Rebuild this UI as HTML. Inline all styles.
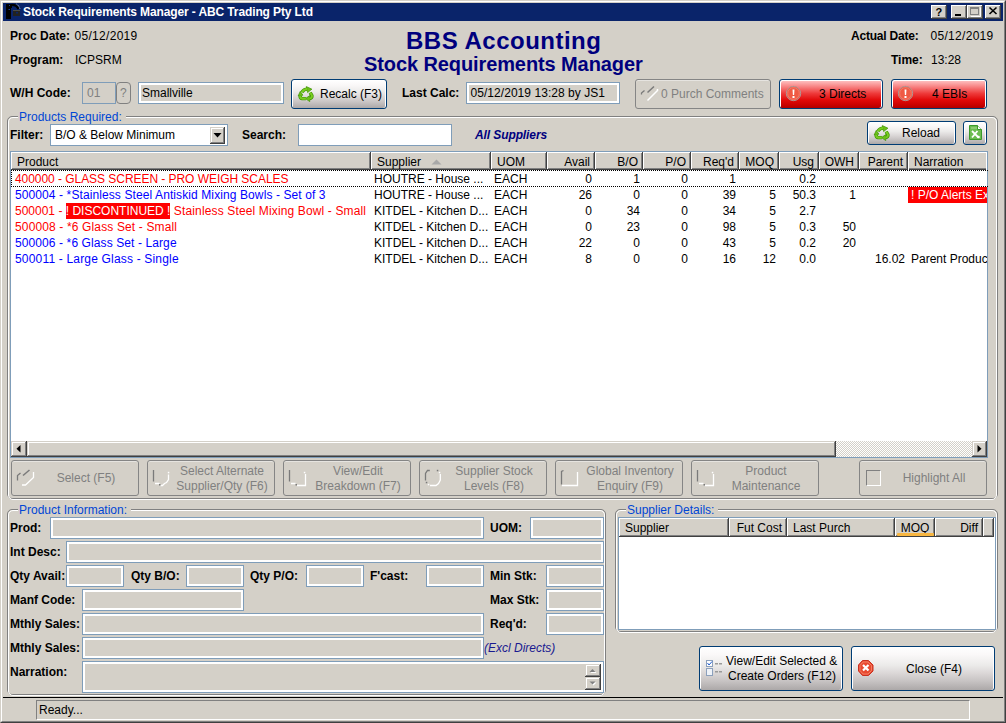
<!DOCTYPE html><html><head><meta charset="utf-8"><title>Stock Requirements Manager</title><style>
*{margin:0;padding:0;box-sizing:border-box}
html,body{width:1006px;height:723px;overflow:hidden;background:#d4d0c8}
body{position:relative;font-family:"Liberation Sans",sans-serif;font-size:12px;color:#000}
.t{position:absolute;font-size:12px;line-height:14px;white-space:nowrap}
.b{font-weight:bold}
.ic{position:absolute;overflow:visible}
.bx{position:absolute}
.frame{position:absolute;border-top:1px solid #d4d0c8;border-left:1px solid #d4d0c8;border-right:1px solid #404040;border-bottom:1px solid #404040}
.frame2{position:absolute;border-top:1px solid #fff;border-left:1px solid #fff;border-right:1px solid #808080;border-bottom:1px solid #808080}
.title{position:absolute;background:#0a246a}
.tbtn{position:absolute;background:#d4d0c8;box-shadow:inset -1px -1px 0 #404040,inset 1px 1px 0 #d4d0c8,inset -2px -2px 0 #808080,inset 2px 2px 0 #fff}
.ttb{position:absolute;background:#d4d0c8;box-shadow:inset -1px -1px 0 #404040,inset 1px 1px 0 #fff,inset -2px -2px 0 #808080}
.inp{position:absolute;border:1px solid #7f9db9;background:#fff}
.inpn{position:absolute;border:1px solid #7f9db9;background:#d4d0c8}
.inpg{position:absolute;border:1px solid #7f9db9;background:#d4d0c8;box-shadow:inset 0 0 0 2px #fff}
.btn{position:absolute;border:1px solid #003c74;border-radius:3px;background:linear-gradient(#fff 0%,#faf8f8 18%,#ecebea 42%,#dad6d6 62%,#c6c2c2 80%,#aca8a8 100%);box-shadow:inset 1px 1px 0 #fff,inset -1px 0 0 #fff}
.rbtn{position:absolute;border:1px solid #003c74;border-radius:3px;background:linear-gradient(#ffc8c8 0%,#f88888 22%,#ee3a3a 48%,#e00808 72%,#c80000 90%,#b00000 100%);box-shadow:inset 1px 1px 0 #fff,inset -1px 0 0 #fff}
.dbtn{position:absolute;border:1px solid #858585;border-radius:3px;background:#d4d0c8;box-shadow:inset 0 1px 0 #e6e4e0}
.qbtn{position:absolute;border:1px solid #808080;border-radius:4px;background:#d4d0c8}
.g1{position:absolute;border:1px solid #808080;border-radius:5px}
.g2{position:absolute;border:1px solid #fff;border-radius:5px}
.glbl{position:absolute;color:#0046d5;background:#d4d0c8;padding:0 4px 0 1px;font-size:12px;line-height:14px;white-space:nowrap}
.dis{color:#808080}
.hc{position:absolute;background:#d4d0c8;box-shadow:inset -1px -1px 0 #404040,inset 1px 1px 0 #fff,inset -2px -2px 0 #808080}
.red{color:#ff0000}.blu{color:#0000ff}
</style></head><body>
<div class="frame" style="left:0px;top:0px;width:1006px;height:723px;"></div>
<div class="frame2" style="left:1px;top:1px;width:1004px;height:721px;"></div>
<div class="title" style="left:3px;top:3px;width:1000px;height:18px;"></div>
<div class="t b" style="left:23px;top:5px;color:#fff;letter-spacing:-0.12px">Stock Requirements Manager - ABC Trading Pty Ltd</div>
<div class="ttb" style="left:931px;top:5px;width:16px;height:14px;"></div>
<div class="ttb" style="left:951px;top:5px;width:16px;height:14px;"></div>
<div class="ttb" style="left:967px;top:5px;width:16px;height:14px;"></div>
<div class="ttb" style="left:985px;top:5px;width:16px;height:14px;"></div>
<svg class="ic" style="left:0;top:0" width="1006" height="24"><path d="M6 4H12V8H11V19H6z" fill="#000"/><rect x="9" y="5" width="1" height="1" fill="#1a3a9a"/><rect x="8.5" y="9" width="1.5" height="1" fill="#1a3a9a"/><path d="M11 5 Q16.5 4.5 18.5 9" stroke="#000" stroke-width="2.2" fill="none"/><path d="M16.5 4 Q19 5.5 20 9" stroke="#d0d0d0" stroke-width="0.9" fill="none" stroke-dasharray="1 0.8"/><rect x="13" y="10" width="7" height="6" fill="#222220"/><rect x="13" y="10" width="7" height="1" fill="#4a4a46"/><rect x="16" y="12" width="2" height="1.5" fill="#0a246a"/><text x="935.5" y="16" font-family="Liberation Sans" font-weight="bold" font-size="11" fill="#000">?</text><rect x="955" y="14" width="6" height="2" fill="#000"/><rect x="970.5" y="7.5" width="8" height="7" fill="none" stroke="#808080"/><rect x="971" y="8" width="8" height="1" fill="#808080"/><path d="M971 16.5h9.5v-9" stroke="#fff" fill="none"/><path d="M989.5 7.5l7 6.5M996.5 7.5l-7 6.5" stroke="#000" stroke-width="1.6"/></svg>
<div class="t b" style="left:10px;top:29px;">Proc Date:</div>
<div class="t " style="left:75px;top:29px;letter-spacing:0.3px;margin-left:-0.5px">05/12/2019</div>
<div class="t b" style="left:10px;top:53px;">Program:</div>
<div class="t " style="left:75px;top:53px;">ICPSRM</div>
<div class="t b" style="left:10px;top:86px;">W/H Code:</div>
<div class="t b" style="left:406px;top:28px;font-size:24px;line-height:26px;color:#00007e;letter-spacing:0.5px">BBS Accounting</div>
<div class="t b" style="left:364px;top:53px;font-size:20px;line-height:22px;color:#00007e;letter-spacing:-0.1px">Stock Requirements Manager</div>
<div class="t b" style="left:851px;top:29px;letter-spacing:-0.2px">Actual Date:</div>
<div class="t " style="left:931px;top:29px;letter-spacing:0.3px;margin-left:-0.5px">05/12/2019</div>
<div class="t b" style="left:891px;top:53px;">Time:</div>
<div class="t " style="left:931px;top:53px;">13:28</div>
<div class="inpn" style="left:82px;top:82px;width:34px;height:22px;"></div>
<div class="t dis" style="left:87px;top:86px;">01</div>
<div class="qbtn" style="left:116px;top:82px;width:15px;height:22px;"></div>
<div class="t dis" style="left:120px;top:86px;">?</div>
<div class="inpg" style="left:138px;top:82px;width:146px;height:22px;"></div>
<div class="t " style="left:142px;top:86px;">Smallville</div>
<div class="btn" style="left:291px;top:79px;width:96px;height:30px;"></div>
<svg class="ic" style="left:298px;top:86px" width="16" height="16" viewBox="0 0 16 16"><g transform="translate(1,1) scale(0.86)"><g stroke-linejoin="round"><path d="M3.5 6 Q5.5 2.5 9.5 2.5" stroke="#3a9000" stroke-width="4" fill="none"/><path d="M8.5 -0.5 L15 2.5 L10 6.5z" fill="#6cc018" stroke="#3a9000" stroke-width="0.8"/><path d="M3.5 6 Q5.5 2.5 9.5 2.5" stroke="#78cc20" stroke-width="2.4" fill="none"/><path d="M13 6.5 L15 10 Q15.5 13 12 13.5" stroke="#3a9000" stroke-width="4" fill="none"/><path d="M12.5 10 L7.5 13.5 L12.5 17z" fill="#6cc018" stroke="#3a9000" stroke-width="0.8"/><path d="M13 6.5 L15 10 Q15.5 13 12 13.5" stroke="#78cc20" stroke-width="2.4" fill="none"/><path d="M8 13.5 L3.5 13.5 Q1 13 1.5 10" stroke="#3a9000" stroke-width="4" fill="none"/><path d="M-1 10.5 L1.5 5 L4.5 9.5z" fill="#6cc018" stroke="#3a9000" stroke-width="0.8"/><path d="M8 13.5 L3.5 13.5 Q1 13 1.5 10" stroke="#78cc20" stroke-width="2.4" fill="none"/></g></g></svg>
<div class="t " style="left:320px;top:87px;">Recalc (F3)</div>
<div class="t b" style="left:402px;top:86px;">Last Calc:</div>
<div class="inpg" style="left:466px;top:82px;width:154px;height:22px;"></div>
<div class="t " style="left:471px;top:86px;letter-spacing:0.05px;margin-left:-0.5px">05/12/2019 13:28 by JS1</div>
<div class="dbtn" style="left:635px;top:79px;width:136px;height:30px;"></div>
<svg class="ic" style="left:636px;top:82px" width="28" height="24" viewBox="0 0 28 24"><path d="M5.5 12.5 L5.5 11 L8.5 8.5" stroke="#7a7a7a" stroke-width="1.3" fill="none"/><path d="M11.5 10.5 L18 4.5" stroke="#7a7a7a" stroke-width="1.5" fill="none"/><path d="M11.5 18.5 L21.5 8.5 L21.5 7" stroke="#fff" stroke-width="1.5" fill="none"/></svg>
<div class="t dis" style="left:661px;top:87px;">0 Purch Comments</div>
<div class="rbtn" style="left:779px;top:79px;width:104px;height:30px;"></div>
<svg class="ic" style="left:786px;top:86px" width="15" height="16" viewBox="0 0 15 16"><circle cx="7.5" cy="7.5" r="7.2" fill="#ef5a44" stroke="#a89c9c" stroke-width="0.9"/><circle cx="7.5" cy="7.5" r="5.8" fill="none" stroke="#f88070" stroke-width="0.8"/><path d="M6.5 3.5 h2 l-0.4 5.5 h-1.2z" fill="#fff"/><rect x="6.5" y="10" width="2" height="2" fill="#fff"/></svg>
<div class="t " style="left:819px;top:87px;">3 Directs</div>
<div class="rbtn" style="left:891px;top:79px;width:96px;height:30px;"></div>
<svg class="ic" style="left:898px;top:86px" width="15" height="16" viewBox="0 0 15 16"><circle cx="7.5" cy="7.5" r="7.2" fill="#ef5a44" stroke="#a89c9c" stroke-width="0.9"/><circle cx="7.5" cy="7.5" r="5.8" fill="none" stroke="#f88070" stroke-width="0.8"/><path d="M6.5 3.5 h2 l-0.4 5.5 h-1.2z" fill="#fff"/><rect x="6.5" y="10" width="2" height="2" fill="#fff"/></svg>
<div class="t " style="left:932px;top:87px;">4 EBIs</div>
<div class="g1" style="left:7px;top:116px;width:991px;height:383px;"></div>
<div class="g2" style="left:8px;top:117px;width:989px;height:383px;"></div>
<div class="glbl" style="left:18px;top:110px">Products Required:</div>
<div class="t b" style="left:10px;top:128px;">Filter:</div>
<div class="inp" style="left:50px;top:124px;width:178px;height:22px;"></div>
<div class="t " style="left:55px;top:128px;">B/O &amp; Below Minimum</div>
<div class="tbtn" style="left:210px;top:127px;width:15px;height:17px;"></div>
<svg class="ic" style="left:213px;top:133px" width="9" height="5" viewBox="0 0 9 5"><path d="M0.5 0 L8.5 0 L4.5 4.5z" fill="#000"/></svg>
<div class="t b" style="left:242px;top:128px;">Search:</div>
<div class="inp" style="left:298px;top:124px;width:154px;height:22px;"></div>
<div class="t b" style="left:475px;top:128px;font-style:italic;color:#00007e;letter-spacing:-0.1px">All Suppliers</div>
<div class="btn" style="left:867px;top:121px;width:89px;height:24px;"></div>
<svg class="ic" style="left:874px;top:125px" width="16" height="16" viewBox="0 0 16 16"><g transform="translate(1,1) scale(0.86)"><g stroke-linejoin="round"><path d="M3.5 6 Q5.5 2.5 9.5 2.5" stroke="#3a9000" stroke-width="4" fill="none"/><path d="M8.5 -0.5 L15 2.5 L10 6.5z" fill="#6cc018" stroke="#3a9000" stroke-width="0.8"/><path d="M3.5 6 Q5.5 2.5 9.5 2.5" stroke="#78cc20" stroke-width="2.4" fill="none"/><path d="M13 6.5 L15 10 Q15.5 13 12 13.5" stroke="#3a9000" stroke-width="4" fill="none"/><path d="M12.5 10 L7.5 13.5 L12.5 17z" fill="#6cc018" stroke="#3a9000" stroke-width="0.8"/><path d="M13 6.5 L15 10 Q15.5 13 12 13.5" stroke="#78cc20" stroke-width="2.4" fill="none"/><path d="M8 13.5 L3.5 13.5 Q1 13 1.5 10" stroke="#3a9000" stroke-width="4" fill="none"/><path d="M-1 10.5 L1.5 5 L4.5 9.5z" fill="#6cc018" stroke="#3a9000" stroke-width="0.8"/><path d="M8 13.5 L3.5 13.5 Q1 13 1.5 10" stroke="#78cc20" stroke-width="2.4" fill="none"/></g></g></svg>
<div class="t " style="left:902px;top:126px;">Reload</div>
<div class="btn" style="left:963px;top:121px;width:24px;height:24px;"></div>
<svg class="ic" style="left:969px;top:125px" width="14" height="16" viewBox="0 0 14 16"><path d="M0.5 0.5 H8.5 L12.5 4.5 V14.5 H0.5z" fill="#6cbc50" stroke="#3c9a2a"/><path d="M2 2 H8 V4 H2z" fill="#8ccc70"/><path d="M8.5 0.5 V4.5 H12.5" fill="#fff" stroke="#3c9a2a"/><path d="M3 6 L9.5 12.5 M8.5 6 L3 12.5" stroke="#fff" stroke-width="1.8"/><circle cx="9.5" cy="12" r="1.3" fill="#fff"/></svg>
<div class="inp" style="left:10px;top:151px;width:978px;height:307px;"></div>
<div class="hc" style="left:11px;top:152px;width:360px;height:18px;"></div>
<div class="t " style="left:17px;top:155px;">Product</div>
<div class="hc" style="left:371px;top:152px;width:120px;height:18px;"></div>
<div class="t " style="left:377px;top:155px;">Supplier</div>
<div class="hc" style="left:491px;top:152px;width:56px;height:18px;"></div>
<div class="t " style="left:497px;top:155px;">UOM</div>
<div class="hc" style="left:547px;top:152px;width:48px;height:18px;"></div>
<div class="t " style="right:416px;top:155px;">Avail</div>
<div class="hc" style="left:595px;top:152px;width:48px;height:18px;"></div>
<div class="t " style="right:368px;top:155px;">B/O</div>
<div class="hc" style="left:643px;top:152px;width:48px;height:18px;"></div>
<div class="t " style="right:320px;top:155px;">P/O</div>
<div class="hc" style="left:691px;top:152px;width:48px;height:18px;"></div>
<div class="t " style="right:272px;top:155px;">Req'd</div>
<div class="hc" style="left:739px;top:152px;width:40px;height:18px;"></div>
<div class="t " style="right:232px;top:155px;">MOQ</div>
<div class="hc" style="left:779px;top:152px;width:40px;height:18px;"></div>
<div class="t " style="right:192px;top:155px;">Usg</div>
<div class="hc" style="left:819px;top:152px;width:40px;height:18px;"></div>
<div class="t " style="right:152px;top:155px;">OWH</div>
<div class="hc" style="left:859px;top:152px;width:49px;height:18px;"></div>
<div class="t " style="right:103px;top:155px;">Parent</div>
<div class="bx" style="left:908px;top:152px;width:78px;height:18px;background:#d4d0c8;box-shadow:inset 1px 1px 0 #fff,inset 0 -1px 0 #404040,inset 0 -2px 0 #808080"></div>
<div class="t " style="left:914px;top:155px;">Narration</div>
<svg class="ic" style="left:431px;top:159px" width="11" height="6" viewBox="0 0 11 6"><path d="M0.5 5.5 L5.5 0.5 L10.5 5.5z" fill="#a8a8a8"/></svg>
<div class="t " style="left:15px;top:172px;"><span class="red" style="letter-spacing:-0.05px">400000 - GLASS SCREEN - PRO WEIGH SCALES</span></div>
<div class="t " style="left:374px;top:172px;">HOUTRE - House ...</div>
<div class="t " style="left:494px;top:172px;">EACH</div>
<div class="t " style="right:414px;top:172px;">0</div>
<div class="t " style="right:366px;top:172px;">1</div>
<div class="t " style="right:318px;top:172px;">0</div>
<div class="t " style="right:270px;top:172px;">1</div>
<div class="t " style="right:190px;top:172px;">0.2</div>
<div class="t " style="left:15px;top:188px;"><span class="blu" style="letter-spacing:0.1px">500004 - *Stainless Steel Antiskid Mixing Bowls - Set of 3</span></div>
<div class="t " style="left:374px;top:188px;">HOUTRE - House ...</div>
<div class="t " style="left:494px;top:188px;">EACH</div>
<div class="t " style="right:414px;top:188px;">26</div>
<div class="t " style="right:366px;top:188px;">0</div>
<div class="t " style="right:318px;top:188px;">0</div>
<div class="t " style="right:270px;top:188px;">39</div>
<div class="t " style="right:230px;top:188px;">5</div>
<div class="t " style="right:190px;top:188px;">50.3</div>
<div class="t " style="right:150px;top:188px;">1</div>
<div class="bx" style="left:908px;top:187px;width:79px;height:16px;background:#ff0000"></div>
<div class="bx" style="left:908px;top:186px;width:79px;height:17px;overflow:hidden"><div class="t" style="left:3px;top:2px;color:#fff">! P/O Alerts Exceptions</div></div>
<div class="t " style="left:15px;top:204px;"><span class="red">500001 - </span><span style="background:#ff0000;color:#fff;padding:1px 0 1px 0">! DISCONTINUED !</span><span class="red" style="letter-spacing:0.14px"> Stainless Steel Mixing Bowl - Small</span></div>
<div class="t " style="left:374px;top:204px;">KITDEL - Kitchen D...</div>
<div class="t " style="left:494px;top:204px;">EACH</div>
<div class="t " style="right:414px;top:204px;">0</div>
<div class="t " style="right:366px;top:204px;">34</div>
<div class="t " style="right:318px;top:204px;">0</div>
<div class="t " style="right:270px;top:204px;">34</div>
<div class="t " style="right:230px;top:204px;">5</div>
<div class="t " style="right:190px;top:204px;">2.7</div>
<div class="t " style="left:15px;top:220px;"><span class="red" style="letter-spacing:0.14px">500008 - *6 Glass Set - Small</span></div>
<div class="t " style="left:374px;top:220px;">KITDEL - Kitchen D...</div>
<div class="t " style="left:494px;top:220px;">EACH</div>
<div class="t " style="right:414px;top:220px;">0</div>
<div class="t " style="right:366px;top:220px;">23</div>
<div class="t " style="right:318px;top:220px;">0</div>
<div class="t " style="right:270px;top:220px;">98</div>
<div class="t " style="right:230px;top:220px;">5</div>
<div class="t " style="right:190px;top:220px;">0.3</div>
<div class="t " style="right:150px;top:220px;">50</div>
<div class="t " style="left:15px;top:236px;"><span class="blu" style="letter-spacing:0.1px">500006 - *6 Glass Set - Large</span></div>
<div class="t " style="left:374px;top:236px;">KITDEL - Kitchen D...</div>
<div class="t " style="left:494px;top:236px;">EACH</div>
<div class="t " style="right:414px;top:236px;">22</div>
<div class="t " style="right:366px;top:236px;">0</div>
<div class="t " style="right:318px;top:236px;">0</div>
<div class="t " style="right:270px;top:236px;">43</div>
<div class="t " style="right:230px;top:236px;">5</div>
<div class="t " style="right:190px;top:236px;">0.2</div>
<div class="t " style="right:150px;top:236px;">20</div>
<div class="t " style="left:15px;top:252px;"><span class="blu" style="letter-spacing:0.18px">500011 - Large Glass - Single</span></div>
<div class="t " style="left:374px;top:252px;">KITDEL - Kitchen D...</div>
<div class="t " style="left:494px;top:252px;">EACH</div>
<div class="t " style="right:414px;top:252px;">8</div>
<div class="t " style="right:366px;top:252px;">0</div>
<div class="t " style="right:318px;top:252px;">0</div>
<div class="t " style="right:270px;top:252px;">16</div>
<div class="t " style="right:230px;top:252px;">12</div>
<div class="t " style="right:190px;top:252px;">0.0</div>
<div class="t " style="right:101px;top:252px;">16.02</div>
<div class="bx" style="left:908px;top:250px;width:79px;height:17px;overflow:hidden"><div class="t" style="left:3px;top:2px">Parent Product</div></div>
<div class="bx" style="left:11px;top:170px;width:977px;height:17px;border:1px dotted #000;border-right:none"></div>
<div class="tbtn" style="left:11px;top:441px;width:16px;height:16px;"></div>
<svg class="ic" style="left:16px;top:445px" width="5" height="8" viewBox="0 0 5 8"><path d="M4.5 0 L4.5 7.5 L0.5 3.75z" fill="#000"/></svg>
<div class="tbtn" style="left:27px;top:441px;width:809px;height:16px;"></div>
<div class="bx" style="left:836px;top:441px;width:136px;height:16px;background:repeating-conic-gradient(#fff 0 25%,#d4d0c8 0 50%) 0 0/2px 2px"></div>
<div class="tbtn" style="left:972px;top:441px;width:15px;height:16px;"></div>
<svg class="ic" style="left:977px;top:445px" width="5" height="8" viewBox="0 0 5 8"><path d="M0.5 0 L0.5 7.5 L4.5 3.75z" fill="#000"/></svg>
<div class="dbtn" style="left:11px;top:460px;width:128px;height:36px;"></div>
<svg class="ic" style="left:12px;top:462px" width="30" height="30" viewBox="0 0 30 30"><path d="M5.5 18.5 V13.5 L8.5 11" stroke="#7a7a7a" stroke-width="1.3" fill="none"/><path d="M11 13.5 L17.5 8" stroke="#7a7a7a" stroke-width="1.5" fill="none"/><path d="M21.5 10 V15.5 L13.5 23 H10" stroke="#fff" stroke-width="1.3" fill="none"/></svg>
<div class="t dis" style="left:-114px;width:400px;text-align:center;top:471px;">Select (F5)</div>
<div class="dbtn" style="left:147px;top:460px;width:128px;height:36px;"></div>
<svg class="ic" style="left:148px;top:462px" width="30" height="30" viewBox="0 0 30 30"><path d="M5.5 8 V19.5" stroke="#7a7a7a" stroke-width="1.3"/><path d="M7 21.5 H11.5 M12.5 23.5 H14.5 L16.5 21.5 L18.5 20.5 L20.5 17.5 V12.5" stroke="#fff" stroke-width="1.3" fill="none"/><rect x="11" y="22" width="1.5" height="1.5" fill="#7a7a7a"/><rect x="19.8" y="9.8" width="1.5" height="1.5" fill="#fff"/></svg>
<div class="t dis" style="left:22px;width:400px;text-align:center;top:464px;">Select Alternate</div>
<div class="t dis" style="left:22px;width:400px;text-align:center;top:479px;">Supplier/Qty (F6)</div>
<div class="dbtn" style="left:283px;top:460px;width:128px;height:36px;"></div>
<svg class="ic" style="left:284px;top:462px" width="30" height="30" viewBox="0 0 30 30"><path d="M5.5 8 V19.5" stroke="#7a7a7a" stroke-width="1.3"/><path d="M7 21.5 H11.5 M13 23.5 H21.5 V12" stroke="#fff" stroke-width="1.3" fill="none"/><rect x="11.5" y="22" width="1.5" height="1.5" fill="#7a7a7a"/><rect x="19.8" y="9.8" width="1.5" height="1.5" fill="#fff"/></svg>
<div class="t dis" style="left:158px;width:400px;text-align:center;top:464px;">View/Edit</div>
<div class="t dis" style="left:158px;width:400px;text-align:center;top:479px;">Breakdown (F7)</div>
<div class="dbtn" style="left:419px;top:460px;width:128px;height:36px;"></div>
<svg class="ic" style="left:420px;top:462px" width="30" height="30" viewBox="0 0 30 30"><path d="M5.5 18.5 V11.5 L7.5 8.5 H9.8" stroke="#7a7a7a" stroke-width="1.3" fill="none"/><rect x="5.8" y="19.8" width="1.5" height="1.5" fill="#7a7a7a"/><rect x="16.8" y="7.8" width="1.5" height="1.5" fill="#7a7a7a"/><path d="M10 23.5 H16 L18.5 21.5 L20.3 18 V12" stroke="#fff" stroke-width="1.3" fill="none"/><rect x="7.8" y="21.8" width="1.5" height="1.5" fill="#fff"/><rect x="18.8" y="9.8" width="1.5" height="1.5" fill="#fff"/></svg>
<div class="t dis" style="left:294px;width:400px;text-align:center;top:464px;">Supplier Stock</div>
<div class="t dis" style="left:294px;width:400px;text-align:center;top:479px;">Levels (F8)</div>
<div class="dbtn" style="left:555px;top:460px;width:128px;height:36px;"></div>
<svg class="ic" style="left:556px;top:462px" width="30" height="30" viewBox="0 0 30 30"><path d="M5.5 22.5 V9.5 L7.5 8.5" stroke="#7a7a7a" stroke-width="1.3" fill="none"/><path d="M6 23.5 H21.5 V10" stroke="#fff" stroke-width="1.3" fill="none"/></svg>
<div class="t dis" style="left:430px;width:400px;text-align:center;top:464px;">Global Inventory</div>
<div class="t dis" style="left:430px;width:400px;text-align:center;top:479px;">Enquiry (F9)</div>
<div class="dbtn" style="left:691px;top:460px;width:128px;height:36px;"></div>
<svg class="ic" style="left:692px;top:462px" width="30" height="30" viewBox="0 0 30 30"><path d="M5.5 8 V19.5" stroke="#7a7a7a" stroke-width="1.3"/><path d="M7 21.5 H11.5 M13 23.5 H21.5 V12" stroke="#fff" stroke-width="1.3" fill="none"/><rect x="11.5" y="22" width="1.5" height="1.5" fill="#7a7a7a"/><rect x="19.8" y="9.8" width="1.5" height="1.5" fill="#fff"/></svg>
<div class="t dis" style="left:566px;width:400px;text-align:center;top:464px;">Product</div>
<div class="t dis" style="left:566px;width:400px;text-align:center;top:479px;">Maintenance</div>
<div class="dbtn" style="left:859px;top:460px;width:128px;height:36px;"></div>
<div class="t dis" style="left:734px;width:400px;text-align:center;top:471px;">Highlight All</div>
<div class="bx" style="left:866px;top:470px;width:15px;height:16px;border-top:1px solid #808080;border-left:1px solid #808080;border-right:1px solid #fff;border-bottom:1px solid #fff"></div>
<div class="g1" style="left:7px;top:509px;width:599px;height:186px;"></div>
<div class="g2" style="left:8px;top:510px;width:597px;height:186px;"></div>
<div class="glbl" style="left:18px;top:503px">Product Information:</div>
<div class="t b" style="left:10px;top:521px;">Prod:</div>
<div class="inpg" style="left:50px;top:517px;width:434px;height:22px;"></div>
<div class="t b" style="left:490px;top:521px;">UOM:</div>
<div class="inpg" style="left:530px;top:517px;width:74px;height:22px;"></div>
<div class="t b" style="left:10px;top:545px;">Int Desc:</div>
<div class="inpg" style="left:66px;top:541px;width:538px;height:22px;"></div>
<div class="t b" style="left:10px;top:569px;">Qty Avail:</div>
<div class="inpg" style="left:66px;top:565px;width:58px;height:22px;"></div>
<div class="t b" style="left:131px;top:569px;">Qty B/O:</div>
<div class="inpg" style="left:186px;top:565px;width:58px;height:22px;"></div>
<div class="t b" style="left:250px;top:569px;">Qty P/O:</div>
<div class="inpg" style="left:306px;top:565px;width:58px;height:22px;"></div>
<div class="t b" style="left:370px;top:569px;">F'cast:</div>
<div class="inpg" style="left:426px;top:565px;width:58px;height:22px;"></div>
<div class="t b" style="left:490px;top:569px;">Min Stk:</div>
<div class="inpg" style="left:546px;top:565px;width:58px;height:22px;"></div>
<div class="t b" style="left:10px;top:593px;">Manf Code:</div>
<div class="inpg" style="left:82px;top:589px;width:162px;height:22px;"></div>
<div class="t b" style="left:490px;top:593px;">Max Stk:</div>
<div class="inpg" style="left:546px;top:589px;width:58px;height:22px;"></div>
<div class="t b" style="left:10px;top:617px;">Mthly Sales:</div>
<div class="inpg" style="left:82px;top:613px;width:402px;height:22px;"></div>
<div class="t b" style="left:490px;top:617px;">Req'd:</div>
<div class="inpg" style="left:546px;top:613px;width:58px;height:22px;"></div>
<div class="t b" style="left:10px;top:641px;">Mthly Sales:</div>
<div class="inpg" style="left:82px;top:637px;width:402px;height:22px;"></div>
<div class="t " style="left:484px;top:641px;font-style:italic;color:#1a1a90">(Excl Directs)</div>
<div class="t b" style="left:10px;top:665px;">Narration:</div>
<div class="inpg" style="left:82px;top:661px;width:522px;height:32px;"></div>
<div class="tbtn" style="left:585px;top:664px;width:16px;height:13px;"></div>
<div class="tbtn" style="left:585px;top:677px;width:16px;height:13px;"></div>
<svg class="ic" style="left:589px;top:668px" width="8" height="6" viewBox="0 0 8 6"><path d="M1.5 5 L4.5 2 L7.5 5z" fill="#fff"/><path d="M0.5 4 L3.5 1 L6.5 4z" fill="#808080"/></svg>
<svg class="ic" style="left:589px;top:681px" width="8" height="6" viewBox="0 0 8 6"><path d="M1.5 1.5 L4.5 4.5 L7.5 1.5z" fill="#fff"/><path d="M0.5 0.5 L3.5 3.5 L6.5 0.5z" fill="#808080"/></svg>
<div class="g1" style="left:615px;top:509px;width:383px;height:123px;"></div>
<div class="g2" style="left:616px;top:510px;width:381px;height:123px;"></div>
<div class="glbl" style="left:626px;top:503px">Supplier Details:</div>
<div class="inp" style="left:618px;top:517px;width:378px;height:113px;"></div>
<div class="hc" style="left:619px;top:518px;width:110px;height:19px;"></div>
<div class="t " style="left:625px;top:521px;">Supplier</div>
<div class="hc" style="left:729px;top:518px;width:58px;height:19px;"></div>
<div class="t " style="right:224px;top:521px;">Fut Cost</div>
<div class="hc" style="left:787px;top:518px;width:108px;height:19px;"></div>
<div class="t " style="left:793px;top:521px;">Last Purch</div>
<div class="hc" style="left:895px;top:518px;width:40px;height:19px;"></div>
<div class="t " style="left:715px;width:400px;text-align:center;top:521px;">MOQ</div>
<div class="hc" style="left:935px;top:518px;width:48px;height:19px;"></div>
<div class="t " style="right:28px;top:521px;">Diff</div>
<div class="hc" style="left:983px;top:518px;width:11px;height:19px;"></div>
<div class="bx" style="left:897px;top:533px;width:37px;height:3px;background:#f8b640;border-radius:1px"></div>
<div class="btn" style="left:699px;top:646px;width:144px;height:45px;"></div>
<svg class="ic" style="left:705px;top:659px" width="20" height="18" viewBox="0 0 20 18"><rect x="1.5" y="1.5" width="6" height="6" fill="#fff" stroke="#8ca0bc"/><path d="M2.5 4 L4 6 L7 2.5" stroke="#1a5ad0" stroke-width="1" fill="none"/><rect x="1.5" y="9.5" width="6" height="7" fill="#eef2f8" stroke="#8ca0bc"/><rect x="10" y="4" width="3" height="1.5" fill="#9a9a9a"/><rect x="14" y="4" width="3" height="1.5" fill="#9a9a9a"/><rect x="10" y="12" width="3" height="1.5" fill="#9a9a9a"/><rect x="14" y="12" width="3" height="1.5" fill="#9a9a9a"/></svg>
<div class="t " style="left:726px;top:654px;">View/Edit Selected &amp;</div>
<div class="t " style="left:728px;top:669px;">Create Orders (F12)</div>
<div class="btn" style="left:851px;top:646px;width:144px;height:45px;"></div>
<svg class="ic" style="left:858px;top:660px" width="16" height="16" viewBox="0 0 16 16"><path d="M4.5 0.5 H10.5 L15 5 V11 L10.5 15.5 H4.5 L0.5 11 V5z" fill="#e84a30" stroke="#c83020"/><path d="M5 2 H10 L13.5 5.5 V10.5 L10 14 H5 L2 10.5 V5.5z" fill="none" stroke="#f88a70" stroke-width="0.8"/><path d="M5 5 L10.5 10.5 M10.5 5 L5 10.5" stroke="#fff" stroke-width="2.2"/></svg>
<div class="t " style="left:906px;top:662px;">Close (F4)</div>
<div class="bx" style="left:3px;top:697px;width:1000px;height:1px;background:#000"></div>
<div class="bx" style="left:36px;top:700px;width:934px;height:20px;border-top:1px solid #808080;border-left:1px solid #808080;border-right:1px solid #fff;border-bottom:1px solid #fff"></div>
<div class="t " style="left:39px;top:703px;">Ready...</div>
</body></html>
